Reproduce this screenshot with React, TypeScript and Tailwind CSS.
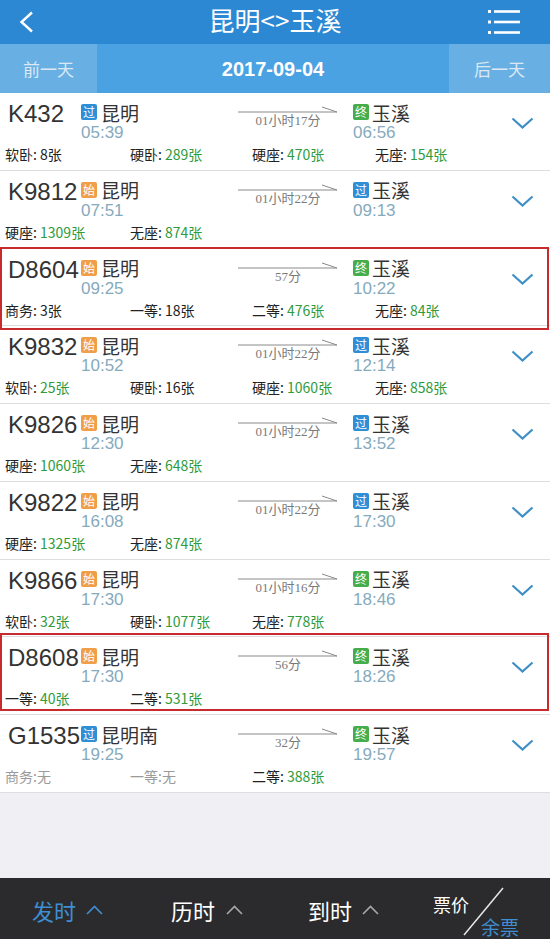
type Seat = { label: string; value: string; tone: "green" | "black" | "none" };

type Train = {
  no: string;
  fromTag: "过" | "始";
  from: string;
  dep: string;
  duration: string;
  toTag: "过" | "终";
  to: string;
  arr: string;
  seats: Seat[];
  box?: string;
};

const g = (label: string, value: string): Seat => ({ label, value, tone: "green" });
const b = (label: string, value: string): Seat => ({ label, value, tone: "black" });
const n = (label: string): Seat => ({ label, value: "无", tone: "none" });

const trains: Train[] = [
  {
    no: "K432", fromTag: "过", from: "昆明", dep: "05:39", duration: "01小时17分",
    toTag: "终", to: "玉溪", arr: "06:56",
    seats: [b("软卧", "8张"), g("硬卧", "289张"), g("硬座", "470张"), g("无座", "154张")],
  },
  {
    no: "K9812", fromTag: "始", from: "昆明", dep: "07:51", duration: "01小时22分",
    toTag: "过", to: "玉溪", arr: "09:13",
    seats: [g("硬座", "1309张"), g("无座", "874张")],
  },
  {
    no: "D8604", fromTag: "始", from: "昆明", dep: "09:25", duration: "57分",
    toTag: "终", to: "玉溪", arr: "10:22",
    seats: [b("商务", "3张"), b("一等", "18张"), g("二等", "476张"), g("无座", "84张")],
    box: "-top-[2px] -bottom-[5px]",
  },
  {
    no: "K9832", fromTag: "始", from: "昆明", dep: "10:52", duration: "01小时22分",
    toTag: "过", to: "玉溪", arr: "12:14",
    seats: [g("软卧", "25张"), b("硬卧", "16张"), g("硬座", "1060张"), g("无座", "858张")],
  },
  {
    no: "K9826", fromTag: "始", from: "昆明", dep: "12:30", duration: "01小时22分",
    toTag: "过", to: "玉溪", arr: "13:52",
    seats: [g("硬座", "1060张"), g("无座", "648张")],
  },
  {
    no: "K9822", fromTag: "始", from: "昆明", dep: "16:08", duration: "01小时22分",
    toTag: "过", to: "玉溪", arr: "17:30",
    seats: [g("硬座", "1325张"), g("无座", "874张")],
  },
  {
    no: "K9866", fromTag: "始", from: "昆明", dep: "17:30", duration: "01小时16分",
    toTag: "终", to: "玉溪", arr: "18:46",
    seats: [g("软卧", "32张"), g("硬卧", "1077张"), g("无座", "778张")],
  },
  {
    no: "D8608", fromTag: "始", from: "昆明", dep: "17:30", duration: "56分",
    toTag: "终", to: "玉溪", arr: "18:26",
    seats: [g("一等", "40张"), g("二等", "531张")],
    box: "-top-[4px] bottom-[3px]",
  },
  {
    no: "G1535", fromTag: "过", from: "昆明南", dep: "19:25", duration: "32分",
    toTag: "终", to: "玉溪", arr: "19:57",
    seats: [n("商务"), n("一等"), g("二等", "388张")],
  },
];

const cjk = "font-['Noto_Sans_CJK_SC',sans-serif]";

function Tag({ kind }: { kind: "过" | "始" | "终" }) {
  const bg = kind === "过" ? "bg-[#2e8fd6]" : kind === "始" ? "bg-[#f09f48]" : "bg-[#45ad4b]";
  return (
    <span
      className={`${bg} flex h-[16px] w-[16px] shrink-0 items-center justify-center rounded-[2px] text-[12px] leading-none text-white`}
    >
      {kind}
    </span>
  );
}

function Arrow() {
  return (
    <svg width="100" height="9" viewBox="0 0 100 9" className="block">
      <line x1="0" y1="7" x2="99" y2="7" stroke="#8a8a8a" strokeWidth="1" />
      <line x1="84" y1="2" x2="99" y2="7" stroke="#8a8a8a" strokeWidth="1" />
    </svg>
  );
}

function Chevron() {
  return (
    <svg width="23" height="12" viewBox="0 0 23 12">
      <polyline points="1.5,1.5 11.5,10.5 21.5,1.5" fill="none" stroke="#3e8fc6" strokeWidth="2.2" />
    </svg>
  );
}

function SeatCell({ seat }: { seat: Seat }) {
  if (seat.tone === "none") {
    return <span className="text-[#9a9a9a]">{seat.label}:{seat.value}</span>;
  }
  return (
    <span className="text-[#222]">
      {seat.label}:{" "}
      <span className={seat.tone === "green" ? "text-[#2f9b3b]" : "text-[#222]"}>{seat.value}</span>
    </span>
  );
}

function TrainRow({ t }: { t: Train }) {
  return (
    <div className={`relative h-[77.75px] shrink-0 border-b border-[#dedede] bg-white ${cjk}`}>
      <div className="flex h-[52px] items-start">
        <div className="w-[81px] shrink-0 pl-[8px] pt-[8px] font-['Liberation_Sans',sans-serif] text-[24px] leading-[26px] text-[#333]">
          {t.no}
        </div>
        <div className="w-[157px] shrink-0 pt-[10px]">
          <div className="flex h-[18px] items-center">
            <Tag kind={t.fromTag} />
            <span className="ml-[4px] text-[19px] leading-none text-[#333]">{t.from}</span>
          </div>
          <div className="mt-[2px] font-['Liberation_Sans',sans-serif] text-[17px] leading-[20px] text-[#86aabd]">
            {t.dep}
          </div>
        </div>
        <div className="w-[100px] shrink-0 pt-[12px]">
          <Arrow />
          <div className="text-center font-['Liberation_Serif','Noto_Sans_CJK_SC',serif] text-[13px] leading-[14px] text-[#7a7a7a]">
            {t.duration}
          </div>
        </div>
        <div className="ml-[15px] pt-[10px]">
          <div className="flex h-[18px] items-center">
            <Tag kind={t.toTag} />
            <span className="ml-[3px] text-[19px] leading-none text-[#333]">{t.to}</span>
          </div>
          <div className="mt-[2px] font-['Liberation_Sans',sans-serif] text-[17px] leading-[20px] text-[#86aabd]">
            {t.arr}
          </div>
        </div>
        <div className="ml-auto mr-[16px] pt-[24px]">
          <Chevron />
        </div>
      </div>
      <div className="grid grid-cols-[125px_122px_123px_1fr] pl-[5px] text-[14px] leading-[18px]">
        {t.seats.map((s) => (
          <SeatCell key={s.label} seat={s} />
        ))}
      </div>
      {t.box && (
        <div className={`pointer-events-none absolute left-0 right-[1px] z-10 border-2 border-[#c72b2e] ${t.box}`} />
      )}
    </div>
  );
}

function UpCaret({ color }: { color: string }) {
  return (
    <svg width="17" height="10" viewBox="0 0 17 10">
      <polyline points="1,9 8.5,1.5 16,9" fill="none" stroke={color} strokeWidth="1.6" />
    </svg>
  );
}

export default function App() {
  return (
    <div className={`flex h-[939px] w-[550px] flex-col overflow-hidden bg-[#efeff4] ${cjk}`}>
      {/* title bar */}
      <div className="flex h-[44px] shrink-0 items-center bg-[#2d88d4] text-white">
        <div className="w-[100px] pl-[19px]">
          <svg width="15" height="22" viewBox="0 0 15 22">
            <polyline points="13,1.5 2.5,11 13,20.5" fill="none" stroke="#fff" strokeWidth="2.4" />
          </svg>
        </div>
        <div className="flex-1 pb-[4px] text-center text-[26px] leading-none">昆明&lt;&gt;玉溪</div>
        <div className="flex w-[100px] justify-end pr-[29px]">
          <svg width="34" height="26" viewBox="0 0 34 26">
            <rect x="1" y="1" width="3" height="3" fill="#fff" />
            <rect x="1" y="11.5" width="3" height="3" fill="#fff" />
            <rect x="1" y="22" width="3" height="3" fill="#fff" />
            <line x1="7" y1="2.5" x2="33" y2="2.5" stroke="#fff" strokeWidth="2.6" />
            <line x1="7" y1="13" x2="33" y2="13" stroke="#fff" strokeWidth="2.6" />
            <line x1="7" y1="23.5" x2="33" y2="23.5" stroke="#fff" strokeWidth="2.6" />
          </svg>
        </div>
      </div>

      {/* date bar */}
      <div className="flex h-[49px] shrink-0 bg-[#4ba2e2]">
        <div className="flex w-[97px] items-center justify-center bg-[#68afe3] text-[17px] text-[#dce9f5]">
          前一天
        </div>
        <div className="flex flex-1 items-center justify-center font-['Liberation_Sans',sans-serif] text-[20px] font-bold text-white">
          2017-09-04
        </div>
        <div className="flex w-[101px] items-center justify-center bg-[#68afe3] text-[17px] text-[#dce9f5]">
          后一天
        </div>
      </div>

      {/* train list */}
      <div className="flex shrink-0 flex-col">
        {trains.map((t) => (
          <TrainRow key={t.no} t={t} />
        ))}
      </div>

      <div className="flex-1" />

      {/* sort bar */}
      <div className="flex h-[61px] shrink-0 items-center bg-[#2b2b2d] pl-[32px] pt-[2px]">
        <div className="flex w-[139px] items-center">
          <span className="text-[22px] leading-none text-[#3f8ed2]">发时</span>
          <span className="ml-[10px]">
            <UpCaret color="#3f8ed2" />
          </span>
        </div>
        <div className="flex w-[137px] items-center">
          <span className="text-[22px] leading-none text-white">历时</span>
          <span className="ml-[11px]">
            <UpCaret color="#a8a8a8" />
          </span>
        </div>
        <div className="flex w-[125px] items-center">
          <span className="text-[22px] leading-none text-white">到时</span>
          <span className="ml-[10px]">
            <UpCaret color="#a8a8a8" />
          </span>
        </div>
        <div className="relative h-[61px] w-[110px]">
          <div className="pt-[16px] text-[18px] leading-none text-white">票价</div>
          <div className="ml-[48px] mt-[4px] text-[19px] leading-none text-[#3f8ed2]">余票</div>
          <svg width="44" height="50" viewBox="0 0 44 50" className="absolute left-[29px] top-[8px]">
            <line x1="41" y1="1" x2="2" y2="48" stroke="#e8e8e8" strokeWidth="1.5" />
          </svg>
        </div>
      </div>
    </div>
  );
}
